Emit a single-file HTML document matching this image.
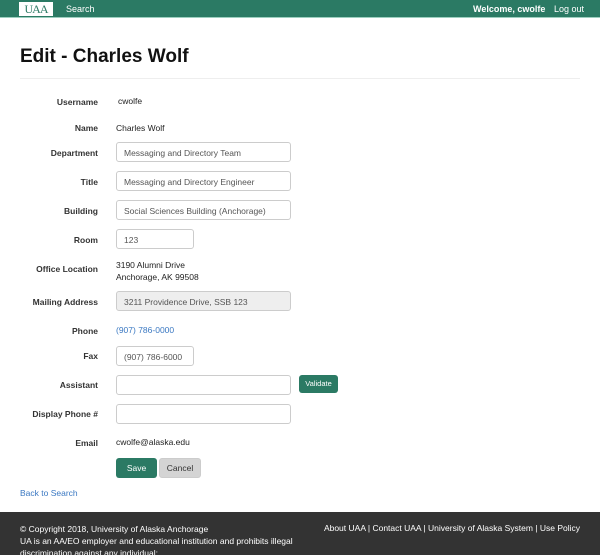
<!DOCTYPE html>
<html><head><style>
*{margin:0;padding:0;box-sizing:border-box}
body{width:600px;height:555px;position:relative;overflow:hidden;font-family:"Liberation Sans",sans-serif;font-size:9px;color:#222;background:#fff}
.nav{position:absolute;left:0;top:0;width:600px;height:18px;background:#2b7a64;border-bottom:1px solid #9ccfbf;color:#fff}
.nav span{position:absolute;top:4px;font-size:9px}
.logo{position:absolute;left:19px;top:2px;width:34px;height:14px;border:1px solid #fff;background:#fff;color:#2b7a64;font-family:"Liberation Serif",serif;font-size:12px;line-height:12px;text-align:center;letter-spacing:-1px}
h1{position:absolute;left:20px;top:46px;font-size:19px;font-weight:bold;color:#111}
.hr{position:absolute;left:20px;top:78px;width:560px;border-top:1px solid #eee}
.l{position:absolute;right:502px;font-weight:bold;font-size:8.5px;color:#333;text-align:right;white-space:nowrap}
.v{position:absolute;left:116px;font-size:8.5px;color:#222}
.in{position:absolute;left:116px;width:175px;height:20px;border:1px solid #ccc;border-radius:3px;padding:5px 7px;font-size:8.5px;color:#555;background:#fff}
.btn{position:absolute;border-radius:3px;color:#fff;font-size:8.5px;text-align:center}
.foot{position:absolute;left:0;top:512px;width:600px;height:43px;background:#333;color:#fff;font-size:8.5px}
a{color:#3a78c2;text-decoration:none}
</style></head><body>
<div class="nav"><div class="logo">UAA</div><span style="left:66px">Search</span><span style="left:473px;font-weight:bold">Welcome, cwolfe</span><span style="left:554px">Log out</span></div>
<h1>Edit - Charles Wolf</h1>
<div class="hr"></div>

<div class="l" style="top:97px">Username</div><div class="v" style="top:96px;left:118px">cwolfe</div>
<div class="l" style="top:123px">Name</div><div class="v" style="top:123px">Charles Wolf</div>
<div class="l" style="top:148px">Department</div><div class="in" style="top:142px">Messaging and Directory Team</div>
<div class="l" style="top:177px">Title</div><div class="in" style="top:171px">Messaging and Directory Engineer</div>
<div class="l" style="top:206px">Building</div><div class="in" style="top:200px">Social Sciences Building (Anchorage)</div>
<div class="l" style="top:235px">Room</div><div class="in" style="top:229px;width:78px">123</div>
<div class="l" style="top:264px">Office Location</div><div class="v" style="top:259px;line-height:12px">3190 Alumni Drive<br>Anchorage, AK 99508</div>
<div class="l" style="top:297px">Mailing Address</div><div class="in" style="top:291px;background:#eee">3211 Providence Drive, SSB 123</div>
<div class="l" style="top:326px">Phone</div><div class="v" style="top:325px"><a>(907) 786-0000</a></div>
<div class="l" style="top:351px">Fax</div><div class="in" style="top:346px;width:78px">(907) 786-6000</div>
<div class="l" style="top:380px">Assistant</div><div class="in" style="top:375px"></div>
<div class="btn" style="left:299px;top:375px;width:39px;height:18px;line-height:18px;background:#2b7a64;font-size:7.5px">Validate</div>
<div class="l" style="top:409px">Display Phone #</div><div class="in" style="top:404px"></div>
<div class="l" style="top:438px">Email</div><div class="v" style="top:437px">cwolfe@alaska.edu</div>
<div class="btn" style="left:116px;top:458px;width:41px;height:20px;line-height:20px;background:#2b7a64">Save</div>
<div class="btn" style="left:159px;top:458px;width:42px;height:20px;line-height:18px;background:#d4d4d4;color:#333;border:1px solid #ccc">Cancel</div>
<div class="v" style="left:20px;top:488px"><a>Back to Search</a></div>
<div class="foot">
<div style="position:absolute;left:20px;top:11px;line-height:12px">© Copyright 2018, University of Alaska Anchorage<br>UA is an AA/EO employer and educational institution and prohibits illegal<br>discrimination against any individual:</div>
<div style="position:absolute;right:20px;top:11px">About UAA | Contact UAA | University of Alaska System | Use Policy</div>
</div>
</body></html>
